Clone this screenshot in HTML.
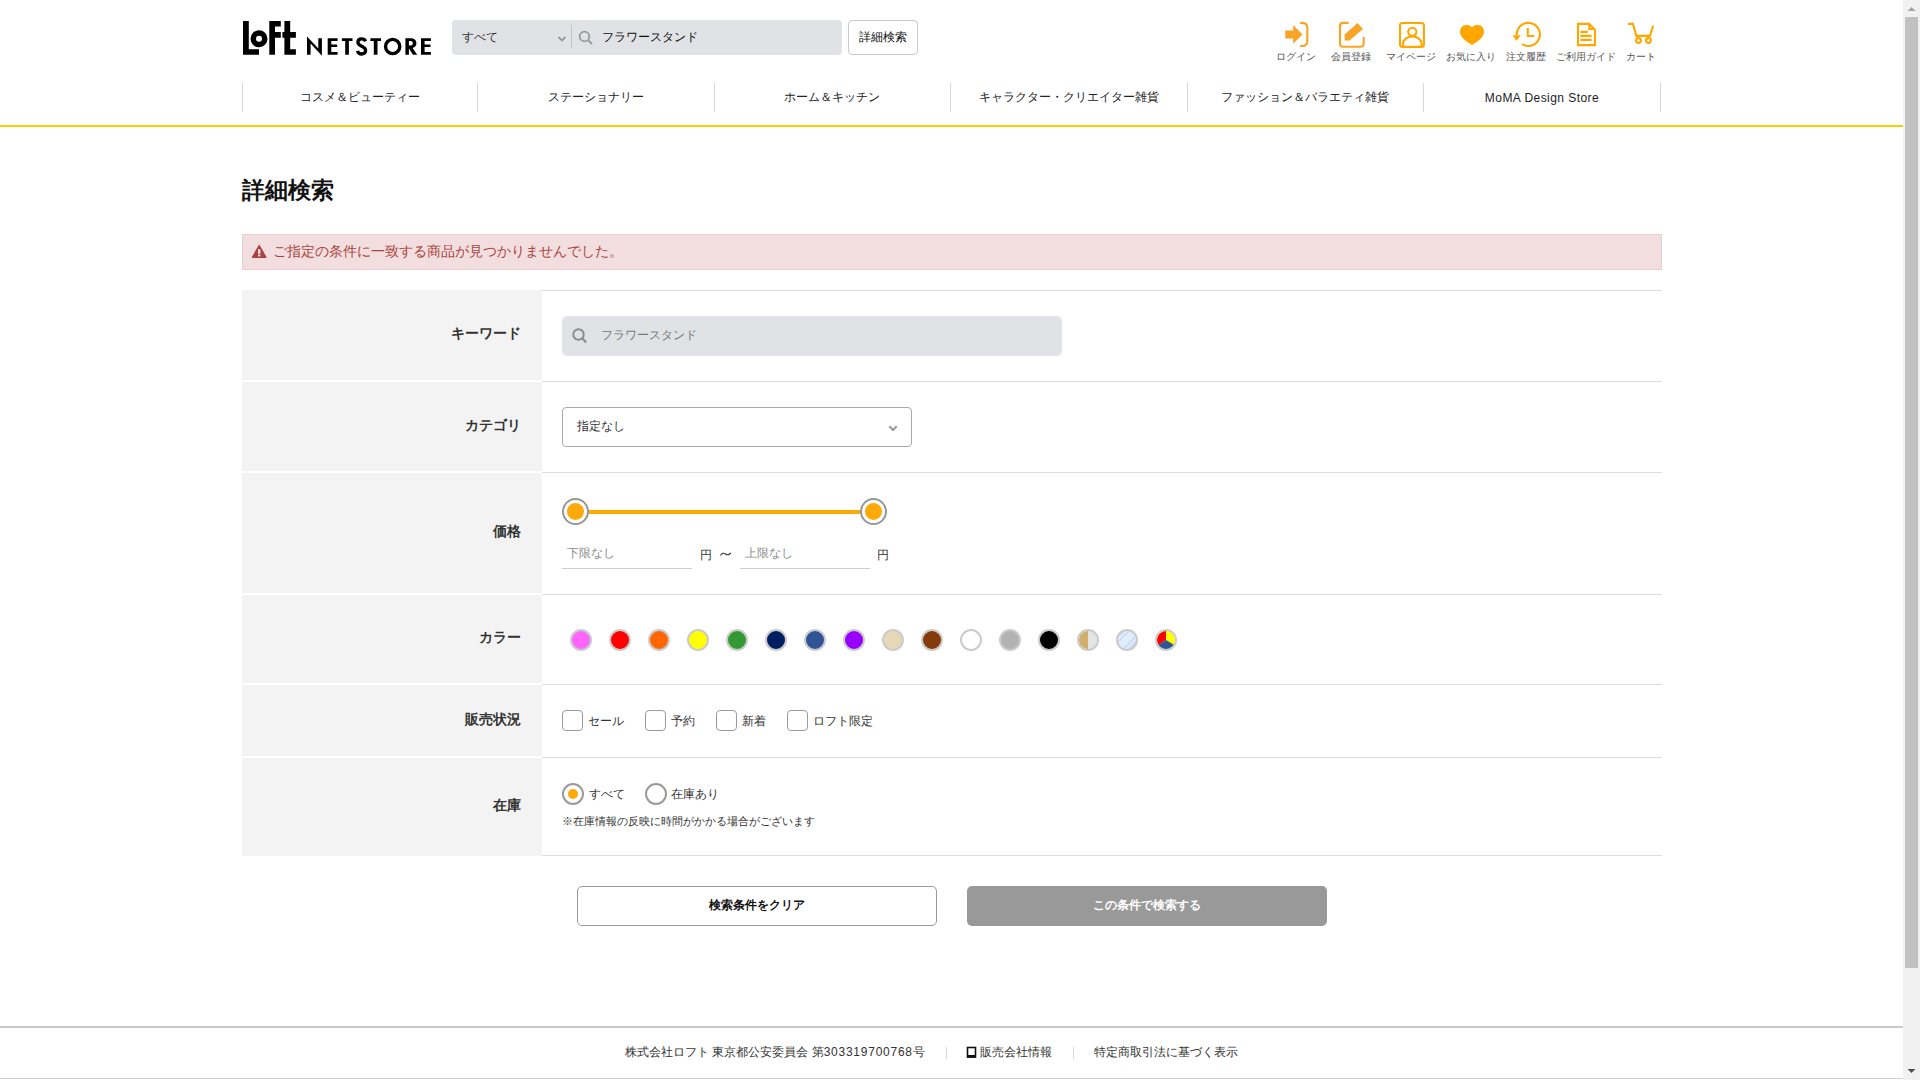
<!DOCTYPE html>
<html lang="ja"><head><meta charset="utf-8"><title>詳細検索</title>
<style>
*{box-sizing:border-box;margin:0;padding:0}
html,body{width:1920px;height:1080px;overflow:hidden;background:#fff}
body{font-family:"Liberation Sans",sans-serif;color:#333;position:relative}
.a{position:absolute;white-space:nowrap}
.t{line-height:1;}
/* header */
#logo{left:242px;top:18px}
#sbar{left:452px;top:20px;width:390px;height:35px;background:#e1e2e6;border-radius:4px}
#sbtn{left:848px;top:20px;width:70px;height:35px;border:1px solid #c8c8c8;border-radius:4px;background:#fff}
.ico{position:absolute;top:0;left:0}
.lbl{font-size:10px;color:#555;line-height:10px;top:52px;text-align:center;width:80px}
.nav{top:83px;width:1px;height:29px;background:#d8d8d8}
.navt{top:91px;font-size:12px;color:#222;line-height:13px;text-align:center;width:236px}
#yline{left:0;top:125px;width:1903px;height:2px;background:#ffcc00}
/* content */
#title{left:242px;top:178px;font-size:23px;font-weight:bold;color:#111;line-height:24px}
#alert{left:242px;top:234px;width:1420px;height:36px;background:#f2dede;border:1px solid #ebccd1}
#alertt{left:273px;top:244px;font-size:14px;color:#a94442;line-height:14px}
.th{left:242px;width:300px;background:#f3f3f3}
.ln{left:542px;width:1120px;height:1px;background:#dcdcdc}
.lab{font-size:14px;font-weight:bold;color:#333;line-height:14px;right:1399px;text-align:right}
/* footer */
.ft{font-size:12px;color:#333;line-height:12px;top:1046px}
</style></head>
<body>
<!-- logo -->
<svg class="a" style="left:0;top:0" width="460" height="70" viewBox="0 0 460 70">
 <g fill="#000">
  <path d="M243,21 H248.8 V49.2 H259 V54.8 H243 Z"/>
  <circle cx="259" cy="38.8" r="8.5"/>
  <path d="M269.3,21 H280.8 V26.6 H275 V32 H280.8 V37.8 H275 V54.8 H269.3 Z"/>
  <path d="M284.4,21 H290.2 V32 H295.9 V37.8 H290.2 V49.2 H295.9 V54.8 H284.4 V37.8 H282.4 V32 H284.4 Z"/>
  <path d="M307,36.4 L318.3,48.6 V38.2 H321.9 V55.7 L310.6,43.4 V54.8 H307 Z"/>
  <path d="M327.7,38.2 H337.6 V41.1 H331.3 V44.5 H337.2 V47.1 H331.3 V51.9 H337.6 V54.8 H327.7 Z"/>
  <path d="M341.9,38.2 H352.5 V41.1 H348.9 V54.8 H345.2 V41.1 H341.9 Z"/>
  <path d="M370.4,38.2 H381 V41.1 H377.5 V54.8 H373.8 V41.1 H370.4 Z"/>
  <path d="M405.4,38.2 H410.8 C414.6,38.2 416.4,40.4 416.4,43.2 C416.4,45.6 415,47.4 412.6,47.9 L417.2,54.8 H412.9 L408.9,48.3 V54.8 H405.4 Z M408.9,41.1 V45.5 H410.4 C412,45.5 412.8,44.7 412.8,43.3 C412.8,41.9 412,41.1 410.4,41.1 Z"/>
  <path d="M421,38.2 H430.9 V41.1 H424.6 V44.5 H430.5 V47.1 H424.6 V51.9 H430.9 V54.8 H421 Z"/>
 </g>
 <circle cx="259" cy="38.8" r="3" fill="#fff"/>
 <path d="M365.6,41.2 C364.8,39.6 363.4,38.9 361.7,38.9 C359.3,38.9 357.9,40.3 357.9,42.2 C357.9,46.8 365.6,45.6 365.6,50.4 C365.6,52.6 363.9,54 361.6,54 C359.4,54 358,52.7 357.5,50.8" fill="none" stroke="#000" stroke-width="3.3"/>
 <circle cx="392.65" cy="46.5" r="7.1" fill="none" stroke="#000" stroke-width="3.4"/>
</svg>

<div class="a" id="sbar"></div>
<div class="a t" style="left:462px;top:31px;font-size:12px;color:#333">すべて</div>
<svg class="a" style="left:556px;top:34px" width="12" height="10"><path d="M2.5,3 L6,6.5 L9.5,3" fill="none" stroke="#999" stroke-width="1.8"/></svg>
<div class="a" style="left:571px;top:25px;width:1px;height:23px;background:#c4c4c8"></div>
<svg class="a" style="left:576px;top:28px" width="20" height="20"><circle cx="8.5" cy="8.5" r="4.8" fill="none" stroke="#999" stroke-width="1.8"/><path d="M12,12 L16,16" stroke="#999" stroke-width="1.8"/></svg>
<div class="a t" style="left:602px;top:31px;font-size:12px;color:#111">フラワースタンド</div>
<div class="a" id="sbtn"></div>
<div class="a t" style="left:859px;top:31px;font-size:12px;color:#111">詳細検索</div>

<!-- header icons -->
<svg class="a" style="left:0;top:0" width="1700" height="70" viewBox="0 0 1700 70">
 <g fill="#f8a426">
  <path d="M1285.2,30.4 H1293.2 V25 L1302.5,34.4 L1293.2,43.8 V38.4 H1285.2 Z"/>
  <path d="M1344.6,34.6 L1357.5,23 L1363,29 L1349.6,40.5 H1344.6 Z"/>
 </g>
 <g fill="none" stroke="#f8a426" stroke-width="2.1">
  <path d="M1300.1,22.9 H1302 Q1307.3,22.9 1307.3,28 V41 Q1307.3,46 1302,46 H1300.1"/>
  <path d="M1348.7,22.9 H1343 Q1340,22.9 1340,26 V43.7 Q1340,46.7 1343,46.7 H1360.7 Q1363.7,46.7 1363.7,43.7 V37"/>
 </g>
 <g fill="none" stroke="#ffa600" stroke-width="2.1">
  <rect x="1400" y="23" width="23.9" height="23.9" rx="2.5"/>
  <circle cx="1412.3" cy="31.8" r="4.1"/>
  <path d="M1403.1,46 V44 C1403.1,39.5 1407,36.5 1412.3,36.5 C1417.6,36.5 1421.5,39.5 1421.5,44 V46"/>
  <path d="M1516.8,35 A11.55,11.55 0 1 1 1521.9,44"/>
  <path d="M1527.8,28 V36 H1534.3"/>
  <path d="M1578,23.9 H1589.3 L1595,29.8 V45.1 H1578 Z"/>
  <path d="M1589.3,23.9 V29 H1595"/>
  <path d="M1580.4,31.9 H1587.8 M1580.4,35.9 H1591.6 M1580.4,39.9 H1591.6"/>
  <path d="M1628,23.9 H1632.9 L1636.3,35.9 H1650 L1653.1,25.7"/>
  <circle cx="1638.5" cy="40.5" r="2.4"/>
  <circle cx="1648.4" cy="40.5" r="2.4"/>
 </g>
 <g fill="#ffa600">
  <path d="M1472,27.5 C1470,25 1468,25 1466,25 C1462,25 1460,28.5 1460,32 C1460,37.5 1467,42 1472,45 C1477,42 1484,37.5 1484,32 C1484,28.5 1482,25 1478,25 C1476,25 1474,25 1472,27.5 Z"/>
  <path d="M1512.4,35.3 H1520.8 L1516.4,40.8 Z"/>
 </g>
</svg>
<div class="a lbl" style="left:1256px">ログイン</div>
<div class="a lbl" style="left:1311px">会員登録</div>
<div class="a lbl" style="left:1371px">マイページ</div>
<div class="a lbl" style="left:1431px">お気に入り</div>
<div class="a lbl" style="left:1486px">注文履歴</div>
<div class="a lbl" style="left:1546px">ご利用ガイド</div>
<div class="a lbl" style="left:1601px">カート</div>

<!-- nav -->
<div class="a nav" style="left:242px"></div>
<div class="a nav" style="left:477px"></div>
<div class="a nav" style="left:714px"></div>
<div class="a nav" style="left:950px"></div>
<div class="a nav" style="left:1187px"></div>
<div class="a nav" style="left:1423px"></div>
<div class="a nav" style="left:1660px"></div>
<div class="a navt" style="left:242px">コスメ＆ビューティー</div>
<div class="a navt" style="left:478px">ステーショナリー</div>
<div class="a navt" style="left:714px">ホーム＆キッチン</div>
<div class="a navt" style="left:951px">キャラクター・クリエイター雑貨</div>
<div class="a navt" style="left:1187px">ファッション＆バラエティ雑貨</div>
<div class="a navt" style="left:1424px;top:92px;letter-spacing:0.45px">MoMA Design Store</div>
<div class="a" id="yline"></div>

<!-- title + alert -->
<div class="a" id="title">詳細検索</div>
<div class="a" id="alert"></div>
<svg class="a" style="left:251px;top:244px" width="16" height="15"><path d="M8.2,1.6 L14.8,13.2 H1.6 Z" fill="#a94442" stroke="#a94442" stroke-width="1.4" stroke-linejoin="round"/><rect x="7" y="5.2" width="2.4" height="4.6" fill="#f2dede"/><rect x="7" y="10.6" width="2.4" height="1.8" fill="#f2dede"/></svg>
<div class="a" id="alertt">ご指定の条件に一致する商品が見つかりませんでした。</div>

<!-- rows -->
<div class="a th" style="top:290px;height:90px"></div>
<div class="a th" style="top:382px;height:89px"></div>
<div class="a th" style="top:473px;height:120px"></div>
<div class="a th" style="top:595px;height:88px"></div>
<div class="a th" style="top:685px;height:71px"></div>
<div class="a th" style="top:758px;height:98px"></div>
<div class="a ln" style="top:290px"></div>
<div class="a ln" style="top:381px"></div>
<div class="a ln" style="top:472px"></div>
<div class="a ln" style="top:594px"></div>
<div class="a ln" style="top:684px"></div>
<div class="a ln" style="top:757px"></div>
<div class="a ln" style="top:855px"></div>
<div class="a lab" style="top:326px">キーワード</div>
<div class="a lab" style="top:418px">カテゴリ</div>
<div class="a lab" style="top:524px">価格</div>
<div class="a lab" style="top:630px">カラー</div>
<div class="a lab" style="top:712px">販売状況</div>
<div class="a lab" style="top:798px">在庫</div>

<!-- keyword -->
<div class="a" style="left:562px;top:316px;width:500px;height:40px;background:#e1e2e6;border-radius:5px"></div>
<svg class="a" style="left:568px;top:324px" width="24" height="24"><circle cx="10.5" cy="10.5" r="5.2" fill="none" stroke="#8c8c8c" stroke-width="2"/><path d="M14.3,14.3 L18.2,18.6" stroke="#8c8c8c" stroke-width="2.2"/></svg>
<div class="a t" style="left:601px;top:329px;font-size:12px;color:#7a7a7a">フラワースタンド</div>

<!-- category -->
<div class="a" style="left:562px;top:407px;width:350px;height:40px;border:1px solid #ababab;border-radius:4px;background:#fff"></div>
<div class="a t" style="left:577px;top:420px;font-size:12px;color:#333">指定なし</div>
<svg class="a" style="left:886px;top:422px" width="14" height="12"><path d="M3.3,4.3 L7,8 L10.7,4.3" fill="none" stroke="#999" stroke-width="2"/></svg>

<!-- price slider -->
<div class="a" style="left:586px;top:510px;width:276px;height:4px;background:#ffa800"></div>
<div class="a" style="left:562px;top:498px;width:27px;height:27px;border-radius:50%;border:2px solid #979797;background:#fff"></div>
<div class="a" style="left:567px;top:503px;width:17px;height:17px;border-radius:50%;background:#ffa90a"></div>
<div class="a" style="left:860px;top:498px;width:27px;height:27px;border-radius:50%;border:2px solid #979797;background:#fff"></div>
<div class="a" style="left:865px;top:503px;width:17px;height:17px;border-radius:50%;background:#ffa90a"></div>
<div class="a" style="left:562px;top:568px;width:130px;height:1px;background:#cfcfcf"></div>
<div class="a" style="left:740px;top:568px;width:130px;height:1px;background:#cfcfcf"></div>
<div class="a t" style="left:567px;top:547px;font-size:12px;color:#8a8a8a">下限なし</div>
<div class="a t" style="left:745px;top:547px;font-size:12px;color:#8a8a8a">上限なし</div>
<div class="a t" style="left:700px;top:549px;font-size:12px;color:#333">円</div>
<svg class="a" style="left:719px;top:550px" width="14" height="9"><path d="M1.5,5.5 C3,3 4.5,2.6 6.5,4 C8.5,5.4 10,5.2 11.8,2.8" fill="none" stroke="#333" stroke-width="1.1"/></svg>
<div class="a t" style="left:877px;top:549px;font-size:12px;color:#333">円</div>

<!-- colors -->
<svg class="a" style="left:560px;top:620px" width="640" height="40" viewBox="560 620 640 40">
 <defs>
  <clipPath id="c14"><circle cx="1088" cy="640" r="9.2"/></clipPath>
  <clipPath id="c15"><circle cx="1127" cy="640" r="9.2"/></clipPath>
  <clipPath id="c16"><circle cx="1166" cy="640" r="9.2"/></clipPath>
 </defs>
 <g stroke="#cbcbcb" stroke-width="2">
  <circle cx="581" cy="640" r="10" fill="#ff66ff"/>
  <circle cx="620" cy="640" r="10" fill="#ff0000"/>
  <circle cx="659" cy="640" r="10" fill="#ff6600"/>
  <circle cx="698" cy="640" r="10" fill="#ffff00"/>
  <circle cx="737" cy="640" r="10" fill="#339933"/>
  <circle cx="776" cy="640" r="10" fill="#001f60"/>
  <circle cx="815" cy="640" r="10" fill="#2f5597"/>
  <circle cx="854" cy="640" r="10" fill="#9900ff"/>
  <circle cx="893" cy="640" r="10" fill="#e6d7b6"/>
  <circle cx="932" cy="640" r="10" fill="#843c0c"/>
  <circle cx="971" cy="640" r="10" fill="#ffffff"/>
  <circle cx="1010" cy="640" r="10" fill="#b2b2b2"/>
  <circle cx="1049" cy="640" r="10" fill="#000000"/>
 </g>
 <g clip-path="url(#c14)"><rect x="1075" y="628" width="13" height="24" fill="#d2b06a"/><rect x="1088" y="628" width="13" height="24" fill="#e4e4e4"/></g>
 <g clip-path="url(#c15)"><rect x="1115" y="628" width="24" height="24" fill="#e2edfb"/><path d="M1100,661 L1141,620 L1100,620 Z" fill="#c8dcf7"/><path d="M1107,650.5 L1137,620.5" stroke="#eaf2fc" stroke-width="1.3"/><path d="M1110,661 L1151,620 L1151,661 Z" fill="#c8dcf7"/><path d="M1114,661 L1155,620" stroke="#eaf2fc" stroke-width="1.3"/></g>
 <g clip-path="url(#c16)"><rect x="1155" y="628" width="24" height="24" fill="#ffff00"/><path d="M1166,640 L1166,628 L1150,628 L1150,650 Z" fill="#ff0000"/><path d="M1166,640 L1176,646 L1176,652 L1156,652 L1156,646 Z" fill="#2f5597"/></g>
 <g fill="none" stroke="#cbcbcb" stroke-width="2">
  <circle cx="1088" cy="640" r="10"/>
  <circle cx="1127" cy="640" r="10"/>
  <circle cx="1166" cy="640" r="10"/>
 </g>
</svg>

<!-- checkboxes -->
<div class="a" style="left:562px;top:710px;width:21px;height:21px;border:1.5px solid #9a9a9a;border-radius:4px"></div>
<div class="a" style="left:645px;top:710px;width:21px;height:21px;border:1.5px solid #9a9a9a;border-radius:4px"></div>
<div class="a" style="left:716px;top:710px;width:21px;height:21px;border:1.5px solid #9a9a9a;border-radius:4px"></div>
<div class="a" style="left:787px;top:710px;width:21px;height:21px;border:1.5px solid #9a9a9a;border-radius:4px"></div>
<div class="a t" style="left:588px;top:715px;font-size:12px;color:#333">セール</div>
<div class="a t" style="left:671px;top:715px;font-size:12px;color:#333">予約</div>
<div class="a t" style="left:742px;top:715px;font-size:12px;color:#333">新着</div>
<div class="a t" style="left:813px;top:715px;font-size:12px;color:#333">ロフト限定</div>

<!-- radios -->
<div class="a" style="left:562px;top:783px;width:22px;height:22px;border:2px solid #9a9a9a;border-radius:50%"></div>
<div class="a" style="left:568px;top:789px;width:10px;height:10px;background:#ffa90a;border-radius:50%"></div>
<div class="a" style="left:645px;top:783px;width:22px;height:22px;border:2px solid #9a9a9a;border-radius:50%"></div>
<div class="a t" style="left:589px;top:788px;font-size:12px;color:#333">すべて</div>
<div class="a t" style="left:671px;top:788px;font-size:12px;color:#333">在庫あり</div>
<div class="a t" style="left:562px;top:816px;font-size:11px;color:#333">※在庫情報の反映に時間がかかる場合がございます</div>

<!-- buttons -->
<div class="a" style="left:577px;top:886px;width:360px;height:40px;border:1px solid #9a9a9a;border-radius:5px;background:#fff"></div>
<div class="a t" style="left:577px;top:899px;width:360px;text-align:center;font-size:12px;font-weight:bold;color:#111">検索条件をクリア</div>
<div class="a" style="left:967px;top:886px;width:360px;height:40px;border-radius:5px;background:#999"></div>
<div class="a t" style="left:967px;top:899px;width:360px;text-align:center;font-size:12px;font-weight:bold;color:#fff">この条件で検索する</div>

<!-- footer -->
<div class="a" style="left:0;top:1026px;width:1903px;height:2px;background:#cacaca"></div>
<div class="a" style="left:0;top:1078px;width:1903px;height:1px;background:#cfcfcf"></div>
<div class="a t ft" style="left:625px">株式会社ロフト 東京都公安委員会 第<span style="letter-spacing:0.75px">303319700768</span>号</div>
<div class="a" style="left:946px;top:1047px;width:1px;height:12px;background:#d8d8d8"></div>
<svg class="a" style="left:966px;top:1046px" width="12" height="13"><rect x="1.5" y="1.5" width="8" height="9.5" fill="none" stroke="#111" stroke-width="1.6"/><rect x="1" y="9" width="9" height="2.6" fill="#111"/></svg>
<div class="a t ft" style="left:980px">販売会社情報</div>
<div class="a" style="left:1073px;top:1047px;width:1px;height:12px;background:#d8d8d8"></div>
<div class="a t ft" style="left:1094px">特定商取引法に基づく表示</div>

<!-- scrollbar -->
<div class="a" style="left:1903px;top:0;width:17px;height:1080px;background:#f1f1f1"></div>
<div class="a" style="left:1905px;top:17px;width:13px;height:951px;background:#c1c1c1"></div>
<svg class="a" style="left:1903px;top:0" width="17" height="17"><path d="M4.5,11 L8.5,7 L12.5,11 Z" fill="#a3a3a3"/></svg>
<svg class="a" style="left:1903px;top:1063px" width="17" height="17"><path d="M4.5,6 L8.5,10 L12.5,6 Z" fill="#505050"/></svg>


<!-- BUTTONS -->

<!-- FOOTER -->

<!-- SCROLLBAR -->
</body></html>
